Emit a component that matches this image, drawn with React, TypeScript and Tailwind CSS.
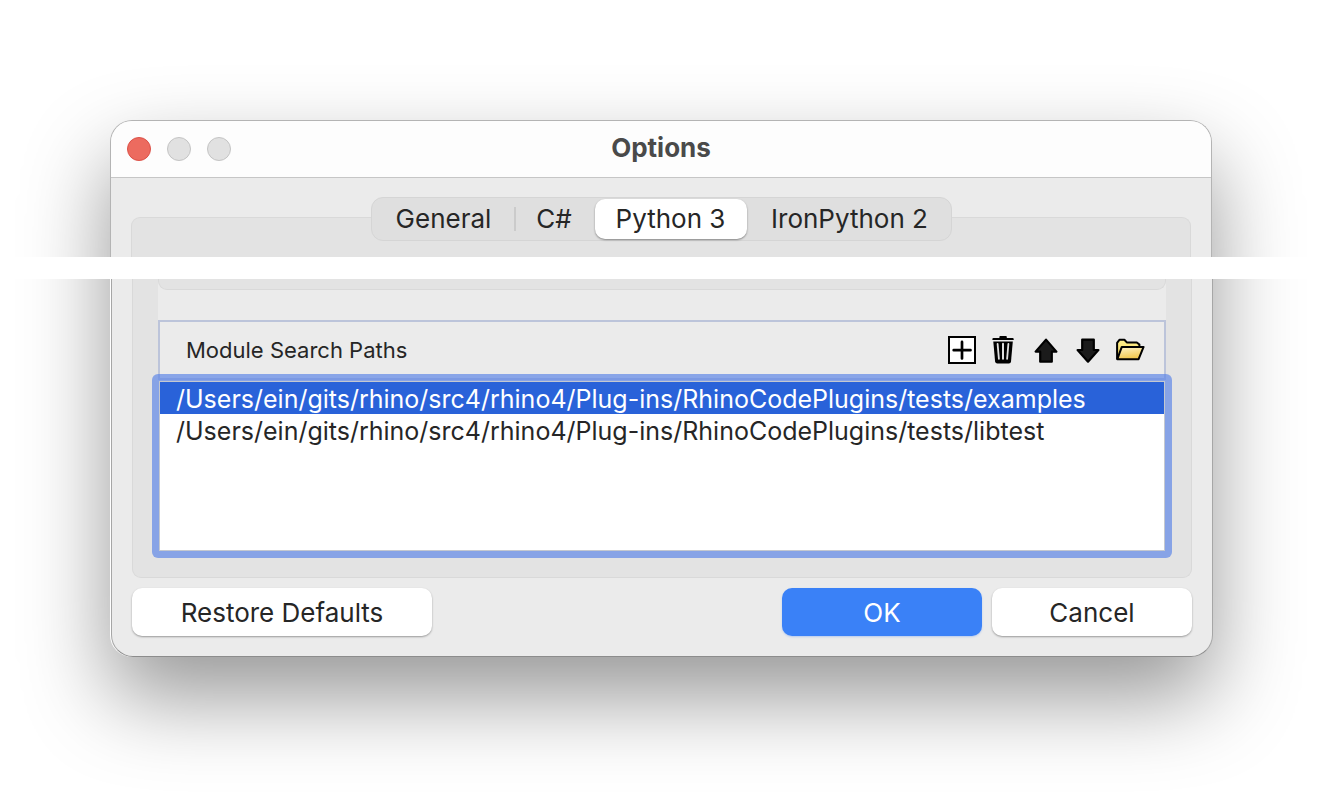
import { useState } from "react";
import type { ReactNode } from "react";

const TABS = [
  { name: "General", width: "w-[140px]" },
  { name: "C#", width: "w-[77px]" },
  { name: "Python 3", width: "w-[152px]" },
  { name: "IronPython 2", width: "w-[202px]" },
];

const PATHS = [
  "/Users/ein/gits/rhino/src4/rhino4/Plug-ins/RhinoCodePlugins/tests/examples",
  "/Users/ein/gits/rhino/src4/rhino4/Plug-ins/RhinoCodePlugins/tests/libtest",
];

function PlusIcon() {
  return (
    <svg width="28" height="28" viewBox="0 0 28 28" aria-hidden="true">
      <rect x="1" y="1" width="26" height="26" fill="#fff" stroke="#000" strokeWidth="2" />
      <path d="M14 5.9V22.5M5.7 14.2H22.5" stroke="#000" strokeWidth="2.7" strokeLinecap="round" />
    </svg>
  );
}

function TrashIcon() {
  return (
    <svg width="24" height="28" viewBox="0 0 24 28" aria-hidden="true">
      <path d="M7.4 2V0.9Q7.4 0.1 8.2 0.1H14Q14.8 0.1 14.8 0.9V2H20.6Q21.7 2 21.7 3V4H0.4V3Q0.4 2 1.5 2Z" />
      <path d="M1.3 5.6H20.8L19 25.6Q18.8 27.6 16.8 27.6H5.3Q3.4 27.6 3.1 25.6Z" />
      <path d="M5.6 7.8L6.9 22.8M16.4 7.8L15.1 22.8" stroke="#e0e0e0" strokeWidth="1.8" strokeLinecap="round" />
      <path d="M11 7.8V22.8" stroke="#e0e0e0" strokeWidth="2" strokeLinecap="round" />
    </svg>
  );
}

function ArrowIcon({ down = false }: { down?: boolean }) {
  return (
    <svg width="24" height="26" viewBox="0 0 24 26" aria-hidden="true">
      <path
        d={
          down
            ? "M6.2 2.6H17.8V13H22.4L12 24.7L1.6 13H6.2Z"
            : "M12 2.6L22.4 14.6H17.8V24.7H6.2V14.6H1.6Z"
        }
        fill="#1b1b1b"
        stroke="#000"
        strokeWidth="2.2"
        strokeLinejoin="round"
      />
    </svg>
  );
}

function FolderIcon() {
  return (
    <svg width="30" height="24" viewBox="0 0 30 24" aria-hidden="true">
      <defs>
        <linearGradient id="folder-back" x1="0" y1="0" x2="0" y2="1">
          <stop offset="0" stopColor="#fff190" />
          <stop offset="1" stopColor="#f0d050" />
        </linearGradient>
        <linearGradient id="folder-front" x1="0" y1="0" x2="0.3" y2="1">
          <stop offset="0" stopColor="#fff6cc" />
          <stop offset="1" stopColor="#f1c84e" />
        </linearGradient>
      </defs>
      <path
        d="M2.1 20.6V4.8L4.4 1.8H9.4L11.8 4.4H21.8L24.4 6.6V12L20 20.6Z"
        fill="url(#folder-back)"
        stroke="#000"
        strokeWidth="2"
        strokeLinejoin="round"
      />
      <path
        d="M6.8 8.9H28.6L23.6 21.2H2.3Z"
        fill="url(#folder-front)"
        stroke="#000"
        strokeWidth="2"
        strokeLinejoin="round"
      />
    </svg>
  );
}

function ToolButton({ label, children }: { label: string; children: ReactNode }) {
  return (
    <button type="button" aria-label={label} className="flex h-7 w-[30px] items-center justify-center">
      {children}
    </button>
  );
}

export default function App() {
  const [tab, setTab] = useState("Python 3");
  const [selected, setSelected] = useState(0);

  return (
    <main className="min-h-screen overflow-hidden bg-white pt-[120px] pr-28 pb-[147px] pl-[110px] font-['Inter','Liberation_Sans',sans-serif] text-[26px] text-[#262626]">
      <section
        aria-labelledby="dialog-title"
        className="rounded-[22px] shadow-[0_40px_86px_rgba(0,0,0,0.41)]"
      >
        <div className="rounded-t-[22px] border border-b-0 border-[#b4b4b4] bg-[#ebebeb]">
          <header className="grid h-[57px] grid-cols-3 items-center rounded-t-[21px] border-b border-[#c6c6c6] bg-[#fdfdfd] px-4">
            <div className="flex gap-4">
              <button type="button" aria-label="Close" className="size-6 rounded-full border border-[#dc5148] bg-[#ec6b5f]" />
              <button type="button" aria-label="Minimize" className="size-6 rounded-full border border-[#c4c4c4] bg-[#e1e1e1]" />
              <button type="button" aria-label="Zoom" className="size-6 rounded-full border border-[#c4c4c4] bg-[#e1e1e1]" />
            </div>
            <h1 id="dialog-title" className="pb-[3px] text-center font-bold text-[#4a4a4a]">
              Options
            </h1>
          </header>

          <div className="px-5 pt-[19px]">
            <div
              role="tablist"
              className="relative z-10 mx-auto flex h-11 w-fit items-center rounded-xl border border-[#d5d5d5] bg-[#dfdfdf]"
            >
              {TABS.map((t, i) => {
                const active = t.name === tab;
                const divided = i > 0 && !active && TABS[i - 1].name !== tab;
                return (
                  <div key={t.name} className="flex items-center">
                    <span className={divided ? "h-6 w-0.5 bg-[#cbcbcb]" : "h-6 w-0.5"} />
                    <button
                      type="button"
                      role="tab"
                      aria-selected={active}
                      onClick={() => setTab(t.name)}
                      className={`${t.width} ${
                        active ? "bg-white shadow-[0_1px_2px_rgba(0,0,0,0.4)]" : ""
                      } h-10 rounded-[10px] pb-0.5 whitespace-nowrap`}
                    >
                      {t.name}
                    </button>
                  </div>
                );
              })}
            </div>
            <div className="-mt-6 h-10 rounded-t-[9px] border border-b-0 border-[#d9d9d9] bg-[#e3e3e3]" />
          </div>
        </div>

        <div className="-mx-28 h-[22px] bg-white" />

        <div className="-mr-px ml-px rounded-b-[22px] border border-t-0 border-[#a6a6a6] border-b-[#8c8c8c] bg-[#ebebeb] px-5 pb-5">
          <div className="rounded-b-[9px] border border-t-0 border-[#d9d9d9] bg-[#e3e3e3] px-[25px] pb-[19px]">
            <div className="bg-[#ebebeb]">
              <div className="h-[11px] rounded-b-[9px] border border-t-0 border-[#d9d9d9] bg-[#e3e3e3]" />
              <div className="mt-[30px] flex h-[60px] items-center justify-between border-2 border-[#bcc4da] pr-[19px] pl-[26px]">
                <h2 className="text-[22px]">Module Search Paths</h2>
                <div className="flex items-center gap-3">
                  <ToolButton label="Add path"><PlusIcon /></ToolButton>
                  <ToolButton label="Delete path"><TrashIcon /></ToolButton>
                  <ToolButton label="Move up"><ArrowIcon /></ToolButton>
                  <ToolButton label="Move down"><ArrowIcon down /></ToolButton>
                  <ToolButton label="Open folder"><FolderIcon /></ToolButton>
                </div>
              </div>
            </div>
            <div className="relative -mx-1.5 -mt-1.5 rounded-md bg-[rgba(96,136,231,0.7)] p-[7px]">
              <ul
                role="listbox"
                aria-label="Module Search Paths"
                className="h-[170px] border border-[#c4c8cf] bg-white text-[25px]"
              >
                {PATHS.map((path, i) => (
                  <li
                    key={path}
                    role="option"
                    aria-selected={i === selected}
                    onClick={() => setSelected(i)}
                    className={`h-8 cursor-default pl-4 leading-[34px] whitespace-nowrap ${
                      i === selected ? "bg-[#2962d9] text-white" : ""
                    }`}
                  >
                    {path}
                  </li>
                ))}
              </ul>
            </div>
          </div>

          <footer className="mt-2.5 flex gap-2.5">
            <button type="button" className="h-12 w-[300px] rounded-[10px] bg-white shadow-[0_1px_2px_rgba(0,0,0,0.35)]">
              Restore Defaults
            </button>
            <button type="button" className="ml-auto h-12 w-[200px] rounded-[10px] bg-[#3a81f7] text-white shadow-[0_1px_2px_rgba(58,129,247,0.3)]">
              OK
            </button>
            <button type="button" className="h-12 w-[200px] rounded-[10px] bg-white shadow-[0_1px_2px_rgba(0,0,0,0.35)]">
              Cancel
            </button>
          </footer>
        </div>
      </section>
    </main>
  );
}
